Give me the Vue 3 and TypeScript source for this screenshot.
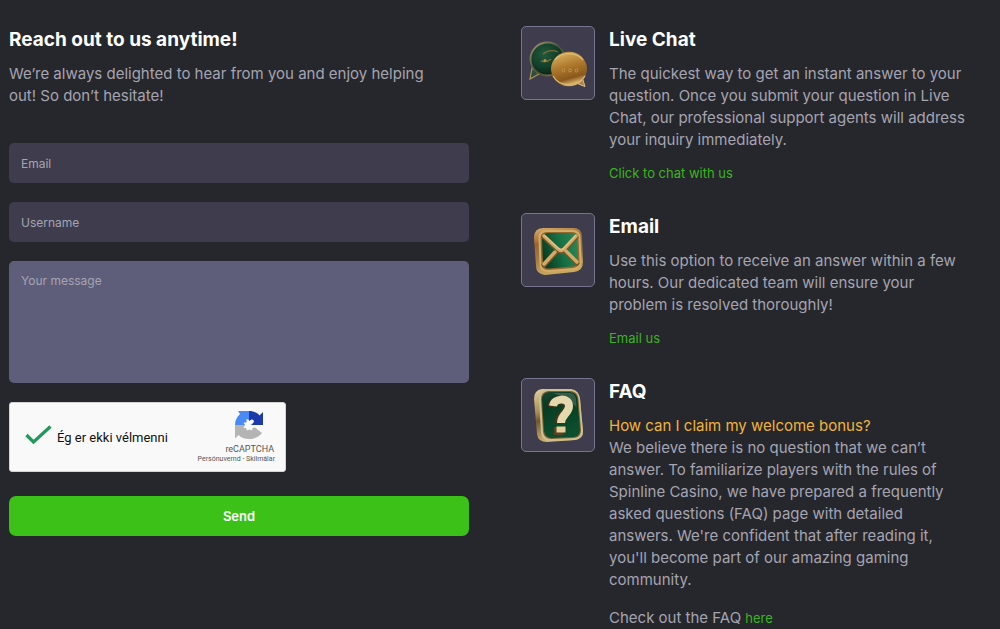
<script setup lang="ts">
import { ref } from 'vue'

const email = ref('')
const username = ref('')
const message = ref('')
const verified = ref(true)
</script>

<template>
  <main class="page">
    <section class="contact">
      <h2>Reach out to us anytime!</h2>
      <p class="text">We’re always delighted to hear from you and enjoy helping out! So don’t hesitate!</p>
      <form class="form" @submit.prevent>
        <input v-model="email" class="field" type="email" placeholder="Email" aria-label="Email" />
        <input v-model="username" class="field" type="text" placeholder="Username" aria-label="Username" />
        <textarea v-model="message" class="field area" placeholder="Your message" aria-label="Your message"></textarea>
        <div class="captcha">
          <label class="robot">
            <span class="tick">
              <input v-model="verified" type="checkbox" />
              <svg v-if="verified" viewBox="0 0 28 22" width="28" height="22" aria-hidden="true">
                <path d="M1.500 9 8.500 16 25.500 0.500" fill="none" stroke="#1f9a5c" stroke-width="3.200" />
              </svg>
            </span>
            <span>Ég er ekki vélmenni</span>
          </label>
          <div class="brand">
            <svg viewBox="0 0 30 30" width="30" height="30" aria-hidden="true">
              <path d="M4 1H15V10L12.500 9 12.500 12.500 9.500 12.500 11 15H1C1 10 3 7 6 4Z" fill="#4a8af4" />
              <path d="M15 1C20 1 23.500 3 25.500 5.500L29 2V15H17L20 12 Q20 9 17.500 9.500 L15 11Z" fill="#1c3aa9" />
              <path d="M1 15H11L9.500 18 12 18 13 20.500 15.500 19.500 18 20.500 18.500 18 21 17.500 28 23C25 27 20.500 29 15 29 10.500 29 7 27.500 4.500 25L1 28.500Z" fill="#b4b4b4" />
            </svg>
            <span class="name">reCAPTCHA</span>
            <span class="legal"><a href="#">Persónuvernd</a> - <a href="#">Skilmálar</a></span>
          </div>
        </div>
        <button class="send" type="submit">Send</button>
      </form>
    </section>

    <section class="options">
      <article class="option">
        <div class="tile">
          <svg viewBox="0 0 72 72" aria-hidden="true">
            <defs>
              <linearGradient id="chatGold" x1="0" y1="0" x2="0.300" y2="1">
                <stop offset="0" stop-color="#8a6128" />
                <stop offset="0.200" stop-color="#cfa253" />
                <stop offset="0.500" stop-color="#b07a2d" />
                <stop offset="0.850" stop-color="#8a581c" />
                <stop offset="1" stop-color="#d2aa62" />
              </linearGradient>
              <radialGradient id="chatGreen" cx="0.400" cy="0.350" r="0.650">
                <stop offset="0" stop-color="#24593c" />
                <stop offset="0.600" stop-color="#12402b" />
                <stop offset="1" stop-color="#092319" />
              </radialGradient>
              <linearGradient id="chatRim" x1="0" y1="0" x2="1" y2="1">
                <stop offset="0" stop-color="#a99a70" />
                <stop offset="0.500" stop-color="#455039" />
                <stop offset="1" stop-color="#8f6c38" />
              </linearGradient>
            </defs>
            <path d="M10 41 8 52 17 47Z" fill="#2f4c38" stroke="#a9945e" stroke-width="1.200" />
            <ellipse cx="25.500" cy="32" rx="17" ry="16.500" fill="url(#chatGreen)" stroke="url(#chatRim)" stroke-width="1.800" />
            <path d="M21 27c5-4 10-4 15-2M19 34c4 1 8 0 10-2" fill="none" stroke="#7f6a35" stroke-width="1.300" />
            <circle cx="23" cy="33.500" r="1.500" fill="#b29442" />
            <path d="M54 56 63 59.500 60 50Z" fill="#ad8144" stroke="#dec38a" stroke-width="1" />
            <ellipse cx="47" cy="42" rx="18" ry="17.300" fill="url(#chatGold)" />
            <path d="M33 33c6-8 21-9 28 0" fill="none" stroke="#e0bc78" stroke-width="1.200" />
            <path d="M31 49c6 11 25 12 32 0" fill="none" stroke="#dcb970" stroke-width="1.200" />
            <g fill="#946425" stroke="#d3a861" stroke-width="0.700">
              <circle cx="41.500" cy="43.500" r="1.400" /><circle cx="48" cy="43.500" r="1.400" /><circle cx="54.500" cy="43.500" r="1.400" />
            </g>
          </svg>
        </div>
        <div class="body">
          <h2>Live Chat</h2>
          <p class="text">The quickest way to get an instant answer to your question. Once you submit your question in Live Chat, our professional support agents will address your inquiry immediately.</p>
          <a class="link" href="#">Click to chat with us</a>
        </div>
      </article>

      <article class="option">
        <div class="tile">
          <svg viewBox="0 0 72 72" aria-hidden="true">
            <defs>
              <linearGradient id="mailGold" x1="0" y1="0" x2="0.200" y2="1">
                <stop offset="0" stop-color="#dcae68" />
                <stop offset="0.350" stop-color="#9b662d" />
                <stop offset="0.700" stop-color="#a58044" />
                <stop offset="1" stop-color="#c9a85c" />
              </linearGradient>
              <linearGradient id="mailGreen" x1="0" y1="0.600" x2="1" y2="0.300">
                <stop offset="0" stop-color="#073b24" />
                <stop offset="0.550" stop-color="#187044" />
                <stop offset="1" stop-color="#2b8656" />
              </linearGradient>
            </defs>
            <path d="M21 14 51 14Q60 14 60 23L61 48Q61 57 52 58L23 61Q14 60 14 52L12 24Q12 14 21 14Z" fill="url(#mailGold)" />
            <path d="M25 16H50Q58.500 16 58.500 24L59.500 47Q59.500 55 51 56L26 58Q17.500 58 17.500 50L16.500 24Q16.500 16 25 16Z" fill="#d2ad6c" />
            <path d="M25 18H50Q56.500 18 56.500 24L57.500 47Q57.500 53 51 54L27 56Q19.500 56 19.500 50L18.500 24Q18.500 18 25 18Z" fill="#96672e" />
            <path d="M26 19H50Q55 19 55 25L56 46Q56 52 50 52.500L27 54.500Q21 54.500 21 49L20 25Q20 19 26 19Z" fill="url(#mailGreen)" />
            <path d="M22 51 33 39M55 49 44 38M22 23 36 36Q39 39 42 36L54 23" fill="none" stroke="#7a5226" stroke-width="5" stroke-linecap="round" />
            <path d="M22 50 33 38M55 48 44 37M22 22 36 35Q39 38 42 35L54 22" fill="none" stroke="#cfab68" stroke-width="3.500" stroke-linecap="round" />
            <path d="M22 21 36 34Q39 37 42 34L54 21" fill="none" stroke="#ead097" stroke-width="1" stroke-linecap="round" />
          </svg>
        </div>
        <div class="body">
          <h2>Email</h2>
          <p class="text">Use this option to receive an answer within a few hours. Our dedicated team will ensure your problem is resolved thoroughly!</p>
          <a class="link" href="#">Email us</a>
        </div>
      </article>

      <article class="option">
        <div class="tile">
          <svg viewBox="0 0 72 72" aria-hidden="true">
            <defs>
              <linearGradient id="faqEdge" x1="0" y1="0" x2="0.200" y2="1">
                <stop offset="0" stop-color="#e2d2a2" />
                <stop offset="0.450" stop-color="#a58b50" />
                <stop offset="0.600" stop-color="#6f5730" />
                <stop offset="1" stop-color="#d3b56f" />
              </linearGradient>
              <linearGradient id="faqGreen" x1="0" y1="0" x2="0.300" y2="1">
                <stop offset="0" stop-color="#1b4430" />
                <stop offset="0.300" stop-color="#073b23" />
                <stop offset="1" stop-color="#0d4e2e" />
              </linearGradient>
            </defs>
            <path d="M20 10 49 11Q57 12 58 20L61 52Q61 60 53 61L25 63Q16 63 15 55L12 20Q12 11 20 10Z" fill="url(#faqEdge)" />
            <path d="M25 10H49Q57 11 58 20L61 52Q61 60 53 61L28 62Q20 62 19 54L17 19Q17 11 25 10Z" fill="#cfbe91" />
            <path d="M26 12H49Q55.500 12.500 56.500 20L59 51Q59 58.500 52 59L29 60Q22 59.500 21 53L19 20Q19 13 26 12Z" fill="#7a6234" />
            <path d="M27 13H48Q54.500 13.500 55.500 20L58 51Q58 57.500 51 58L29 59Q23 58 22 52L20 21Q20 13.500 27 13Z" fill="url(#faqGreen)" />
            <path d="M31 14H48Q53 14 54 20L54.500 28Q43 18 31 14Z" fill="#9aa396" opacity="0.300" />
            <path d="M29 28C31 19 45 19 45 28 45 35 37 36 36 44" fill="none" stroke="#45351a" stroke-width="8" />
            <path d="M32 48H41V56H32Z" fill="#5a4323" />
            <path d="M31 27C32 19 47 18 47 27 47 35 39 35 39 44" fill="none" stroke="#e6d8ae" stroke-width="8" />
            <path d="M34.500 47.500H43.500V53.500H34.500Z" fill="#e2cf9b" />
          </svg>
        </div>
        <div class="body">
          <h2>FAQ</h2>
          <p class="text"><span class="question">How can I claim my welcome bonus?</span><br />We believe there is no question that we can’t answer. To familiarize players with the rules of Spinline Casino, we have prepared a frequently asked questions (FAQ) page with detailed answers. We're confident that after reading it, you'll become part of our amazing gaming community.</p>
          <p class="text more">Check out the FAQ <a href="#">here</a></p>
        </div>
      </article>
    </section>
  </main>
</template>

<style>
body {
  margin: 0;
  background: #26272c;
}
</style>

<style scoped>
.page {
  display: grid;
  grid-template-columns: 46fr 47fr;
  gap: 52px;
  padding: 26px 9px 0;
  font-family: Inter, "Noto Sans", sans-serif;
  color: #a5a4b1;
}

h2 {
  margin: 0 0 9px;
  font-size: 19px;
  line-height: 28px;
  font-weight: 700;
  color: #fff;
}

.text {
  margin: 0;
  padding-right: 24px;
  font-size: 15px;
  line-height: 22px;
}

.form {
  display: flex;
  flex-direction: column;
  gap: 19px;
  margin-top: 36px;
}

.field {
  box-sizing: border-box;
  width: 100%;
  height: 40px;
  padding: 0 12px;
  border: 0;
  border-radius: 5px;
  background: #3f3d4d;
  color: #fff;
  font-family: inherit;
  font-size: 12px;
  line-height: 20px;
}

.field::placeholder {
  color: #a5a4b1;
  opacity: 1;
}

.area {
  height: 122px;
  padding: 10px 12px;
  background: #5f5e7a;
  resize: none;
}

.captcha {
  box-sizing: border-box;
  display: flex;
  align-items: center;
  justify-content: space-between;
  width: 277px;
  height: 70px;
  padding: 0 10px 0 15px;
  border: 1px solid #d3d3d3;
  border-radius: 3px;
  background: #f9f9f9;
  font-family: Roboto, sans-serif;
  color: #111;
}

.robot {
  display: flex;
  align-items: center;
  gap: 4px;
  font-size: 13px;
  white-space: nowrap;
}

.tick {
  display: grid;
}

.tick > * {
  grid-area: 1 / 1;
}

.tick svg {
  overflow: visible;
}

.tick input {
  appearance: none;
  width: 28px;
  height: 22px;
  margin: 0;
}

.brand {
  display: flex;
  flex-direction: column;
  align-items: flex-end;
  color: #555;
}

.brand svg {
  margin-right: 11px;
}

.name {
  margin: 3px 1px 0 0;
  font-size: 9px;
  line-height: 12px;
}

.legal {
  font-size: 7px;
  line-height: 9px;
  white-space: nowrap;
}

.legal a {
  color: inherit;
  text-decoration: none;
}

.send {
  height: 40px;
  margin-top: 5px;
  border: 0;
  border-radius: 7px;
  background: #3bc117;
  color: #fff;
  font-family: inherit;
  font-size: 13px;
  font-weight: 600;
}

.options {
  display: flex;
  flex-direction: column;
  gap: 29px;
}

.option {
  display: grid;
  grid-template-columns: 74px 1fr;
  align-items: start;
  gap: 14px;
}

.tile {
  box-sizing: border-box;
  height: 74px;
  border: 1px solid #77748f;
  border-radius: 5px;
  background: #3f3d4d;
}

.tile svg {
  display: block;
  width: 100%;
  height: 100%;
}

.link {
  display: block;
  width: fit-content;
  margin-top: 11px;
  font-size: 13px;
  line-height: 22px;
}

.link,
.more a {
  color: #3bb51e;
  text-decoration: none;
}

.question {
  color: #f0b43c;
}

.more {
  margin-top: 16px;
}

.more a {
  font-size: 13px;
}
</style>
